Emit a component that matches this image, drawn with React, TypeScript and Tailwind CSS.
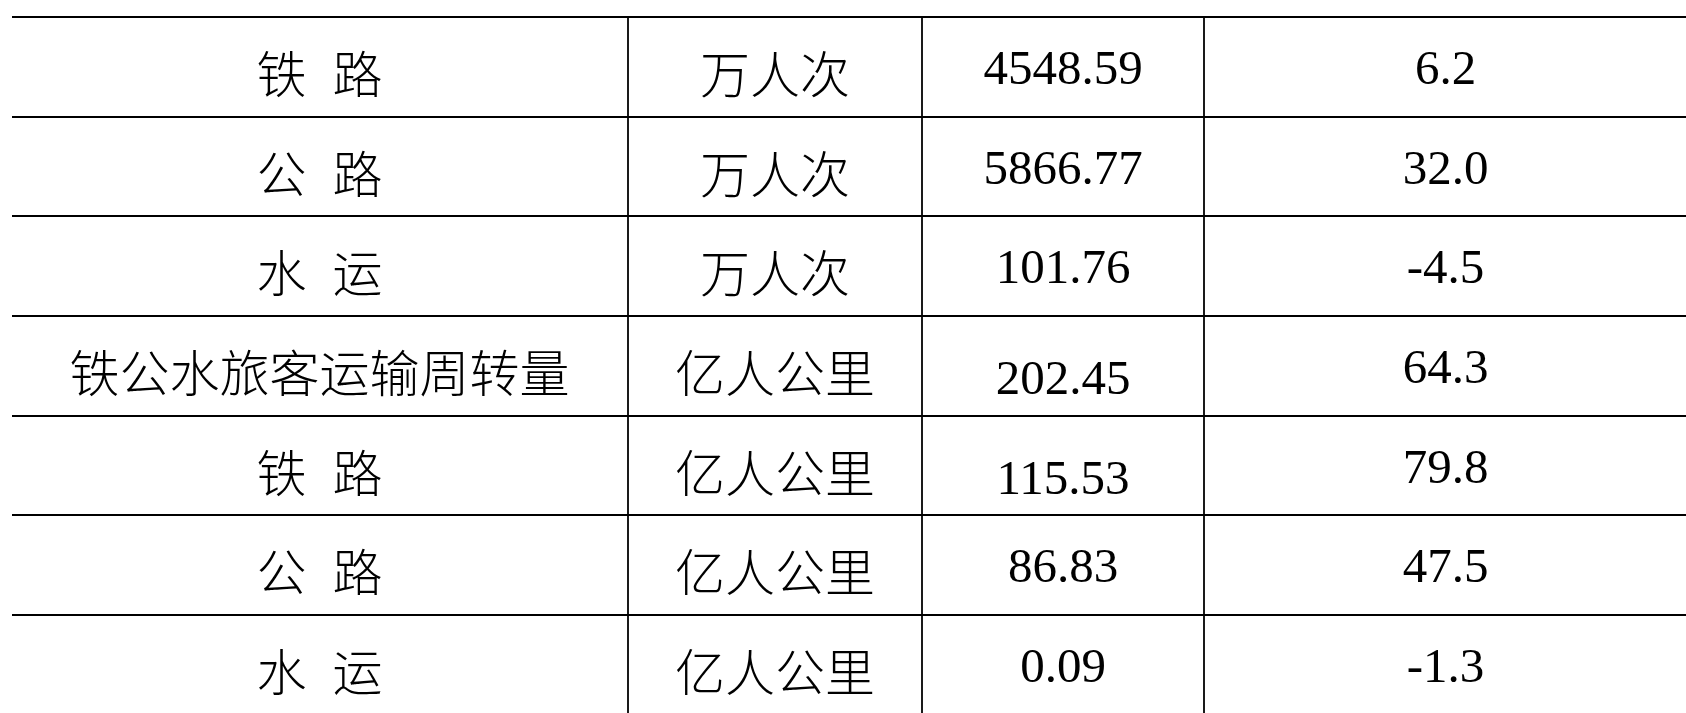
import React from 'react'

type Row = {
  name: string
  unit: string
  value: string
  growth: string
  lowValue?: boolean
}

const rows: Row[] = [
  { name: '铁 路', unit: '万人次', value: '4548.59', growth: '6.2' },
  { name: '公 路', unit: '万人次', value: '5866.77', growth: '32.0' },
  { name: '水 运', unit: '万人次', value: '101.76', growth: '-4.5' },
  { name: '铁公水旅客运输周转量', unit: '亿人公里', value: '202.45', growth: '64.3', lowValue: true },
  { name: '铁 路', unit: '亿人公里', value: '115.53', growth: '79.8', lowValue: true },
  { name: '公 路', unit: '亿人公里', value: '86.83', growth: '47.5' },
  { name: '水 运', unit: '亿人公里', value: '0.09', growth: '-1.3' }
]

const cjk = "font-[family-name:'Noto_Sans_CJK_SC',sans-serif] text-[50px] leading-none font-light [word-spacing:15px]"
const num = "font-[family-name:'Liberation_Serif',serif] text-[49px] leading-none"

export default function App() {
  return (
    <div className="h-[713px] w-[1686px] overflow-hidden bg-white text-black">
      <div className="ml-[12px] mt-[16px]">
        {rows.map((row, i) => (
          <div
            key={i}
            className={`grid grid-cols-[615px_294px_282px_1fr] border-t-2 border-black ${i === rows.length - 1 ? 'h-[130px]' : 'h-[99.67px]'}`}
          >
            <div className={`flex justify-center pt-[28px] ${cjk}`}>{row.name}</div>
            <div className={`flex justify-center border-l-2 border-[#1a1a1a] pt-[28px] ${cjk}`}>{row.unit}</div>
            <div className={`flex justify-center border-l-2 border-[#1a1a1a] ${row.lowValue ? 'pt-[36px]' : 'pt-[25px]'} ${num}`}>
              {row.value}
            </div>
            <div className={`flex justify-center border-l-2 border-[#1a1a1a] pt-[25px] ${num}`}>{row.growth}</div>
          </div>
        ))}
      </div>
    </div>
  )
}
